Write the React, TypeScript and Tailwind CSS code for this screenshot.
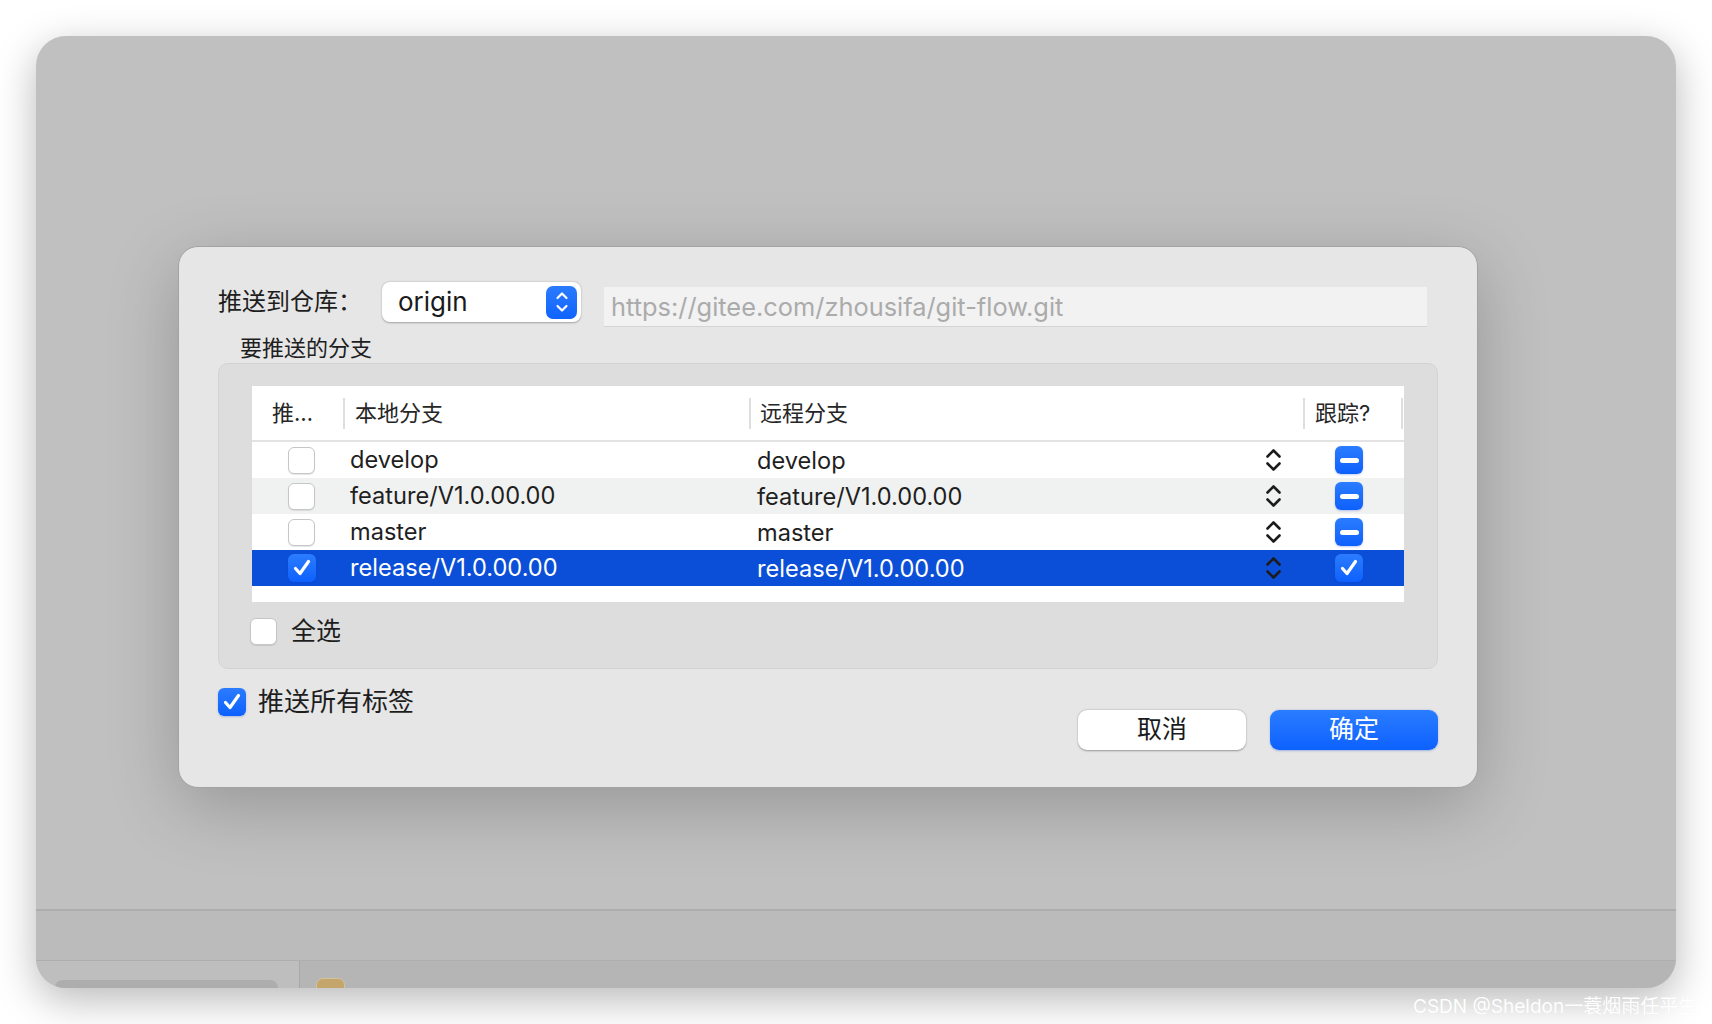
import React from "react";

type Row = {
  local: string;
  remote: string;
  push: boolean;
  track: "minus" | "check";
  striped?: boolean;
  selected?: boolean;
};

const rows: Row[] = [
  { local: "develop", remote: "develop", push: false, track: "minus" },
  { local: "feature/V1.0.00.00", remote: "feature/V1.0.00.00", push: false, track: "minus", striped: true },
  { local: "master", remote: "master", push: false, track: "minus" },
  { local: "release/V1.0.00.00", remote: "release/V1.0.00.00", push: true, track: "check", selected: true },
];

function EmptyBox() {
  return (
    <div className="h-[27px] w-[27px] rounded-[6px] border border-[#c6c6c6] bg-white shadow-[0_1px_1px_rgba(0,0,0,0.1)]" />
  );
}

function BlueBox({ mark }: { mark: "minus" | "check" }) {
  return (
    <div className="flex h-[28px] w-[28px] items-center justify-center rounded-[6px] bg-gradient-to-b from-[#2b7cff] to-[#0d60fd] shadow-[0_1px_2px_rgba(0,60,200,0.25)]">
      {mark === "minus" ? (
        <div className="h-[5px] w-[19px] rounded-full bg-white" />
      ) : (
        <svg width="22" height="22" viewBox="0 0 22 22" fill="none">
          <path d="M4.5 11.5 L9 16.5 L17.5 4.5" stroke="white" strokeWidth="3.2" strokeLinecap="round" strokeLinejoin="round" />
        </svg>
      )}
    </div>
  );
}

function Stepper() {
  return (
    <svg width="17" height="24" viewBox="0 0 17 24" fill="none" stroke="#1c1c1c" strokeWidth="2.6" strokeLinecap="round" strokeLinejoin="round">
      <path d="M2.5 8.5 L8.5 2.5 L14.5 8.5" />
      <path d="M2.5 15.5 L8.5 21.5 L14.5 15.5" />
    </svg>
  );
}

function HeaderBar() {
  return <span className="h-[31px] w-[2px] shrink-0 bg-[#dedede]" />;
}

export default function App() {
  return (
    <div className="relative h-[1024px] w-[1712px] overflow-hidden bg-white pl-[36px] pt-[36px] font-[Inter,'Noto_Sans_CJK_SC',sans-serif]">
      {/* dimmed main window */}
      <div className="flex h-[952px] w-[1640px] flex-col overflow-hidden rounded-[30px] bg-[#c0c0c0] shadow-[0_12px_40px_rgba(0,0,0,0.28)]">
        <div className="h-[873px] shrink-0 pl-[142px] pt-[210px]">
          {/* push sheet */}
          <div className="flex h-[542px] w-[1300px] flex-col rounded-[20px] border border-[#a3a3a3] bg-[#e6e6e6] px-[39px] pt-[35px] shadow-[0_18px_70px_rgba(0,0,0,0.22)]">
            <div className="flex h-[44px] items-start">
              <div className="flex h-[40px] w-[164px] items-center text-[24px] text-[#1e1e1e]">推送到仓库：</div>
              <div className="flex h-[40px] w-[199px] items-center justify-between rounded-[8px] bg-white pl-[16px] pr-[4px] shadow-[0_0.5px_2px_rgba(0,0,0,0.3)]">
                <span className="text-[26px] leading-none text-[#1a1a1a]">origin</span>
                <div className="flex h-[33px] w-[31px] items-center justify-center rounded-[7px] bg-gradient-to-b from-[#2a7bff] to-[#0f63ff]">
                  <svg width="14" height="24" viewBox="0 0 14 24" fill="none" stroke="white" strokeWidth="2.2" strokeLinecap="round" strokeLinejoin="round">
                    <path d="M2.5 8 L7 3.5 L11.5 8" />
                    <path d="M2.5 16 L7 20.5 L11.5 16" />
                  </svg>
                </div>
              </div>
              <div className="ml-[23px] mt-[5px] flex h-[39px] w-[823px] items-center bg-[#f2f2f2] pl-[7px] shadow-[0_1px_0_rgba(0,0,0,0.08)]">
                <span className="text-[25.4px] leading-none text-[#ababab]">https://gitee.com/zhousifa/git-flow.git</span>
              </div>
            </div>

            <div className="mt-[10px] pl-[22px] text-[22px] leading-[24px] text-[#1e1e1e]">要推送的分支</div>

            <div className="mt-[3px] rounded-[10px] border border-[#d3d3d3] bg-[#dddddd] px-[33px] pb-[23px] pt-[22px]">
              <div className="h-[216px] bg-white">
                <div className="grid h-[56px] grid-cols-[91px_406px_554px_100px] border-b-2 border-[#e3e3e3] text-[22px] text-[#262626]">
                  <div className="flex items-center pl-[20px]">推…</div>
                  <div className="flex items-center">
                    <HeaderBar />
                    <span className="pl-[10px]">本地分支</span>
                  </div>
                  <div className="flex items-center">
                    <HeaderBar />
                    <span className="pl-[9px]">远程分支</span>
                  </div>
                  <div className="flex items-center">
                    <HeaderBar />
                    <span className="pl-[10px]">跟踪?</span>
                    <span className="ml-auto h-[31px] w-[2px] bg-[#dedede]" />
                  </div>
                </div>
                {rows.map((r) => (
                  <div
                    key={r.local}
                    className={`grid h-[36px] grid-cols-[91px_406px_554px_100px] items-center text-[23.6px] leading-none ${
                      r.selected ? "bg-[#0b4fd8] text-white" : r.striped ? "bg-[#f0f1f1] text-[#1f1f1f]" : "bg-white text-[#1f1f1f]"
                    }`}
                  >
                    <div className="pl-[36px]">{r.push ? <BlueBox mark="check" /> : <EmptyBox />}</div>
                    <div className="pl-[7px]">{r.local}</div>
                    <div className="flex items-center pl-[8px] pr-[21px]">
                      <span className="pt-[2px]">{r.remote}</span>
                      <span className="ml-auto">
                        <Stepper />
                      </span>
                    </div>
                    <div className="pl-[32px]">
                      <BlueBox mark={r.track} />
                    </div>
                  </div>
                ))}
              </div>
              <div className="mt-[16px] flex h-[27px] items-center">
                <div className="-ml-[2px]">
                  <EmptyBox />
                </div>
                <span className="ml-[14px] text-[25px] leading-[27px] text-[#1e1e1e]">全选</span>
              </div>
            </div>

            <div className="mt-[19px] flex items-start justify-between">
              <div className="flex h-[28px] items-center">
                <BlueBox mark="check" />
                <span className="ml-[12px] text-[26px] leading-[28px] text-[#1e1e1e]">推送所有标签</span>
              </div>
              <div className="mt-[22px] flex gap-[24px]">
                <button className="flex h-[40px] w-[168px] items-center justify-center rounded-[9px] bg-white text-[25px] text-[#1a1a1a] shadow-[0_0.5px_2px_rgba(0,0,0,0.35)]">
                  取消
                </button>
                <button className="flex h-[40px] w-[168px] items-center justify-center rounded-[9px] bg-gradient-to-b from-[#2a7cff] to-[#0c61ff] text-[25px] text-white shadow-[0_0.5px_2px_rgba(0,60,200,0.3)]">
                  确定
                </button>
              </div>
            </div>
          </div>
        </div>

        <div className="h-[51px] shrink-0 border-t-2 border-[#adadad] bg-[#bbbbbb]" />
        <div className="flex flex-1 border-t border-[#aeaeae]">
          <div className="w-[264px] shrink-0 border-r border-[#a9a9a9] bg-[#bebebe] pl-[19px] pt-[19px]">
            <div className="h-[20px] w-[223px] rounded-t-[8px] bg-[#adadad]" />
          </div>
          <div className="flex flex-1 bg-[#b5b5b5] pl-[16px] pt-[17px]">
            <div className="h-[20px] w-[29px] rounded-t-[7px] border border-[#d3c39f] bg-[#c4a56b]" />
          </div>
        </div>
      </div>

      <div className="absolute left-[1413px] top-[993px] whitespace-nowrap text-[19px] text-white [text-shadow:0_0_1px_rgba(0,0,0,0.05)]">
        CSDN @Sheldon一蓑烟雨任平生
      </div>
    </div>
  );
}
